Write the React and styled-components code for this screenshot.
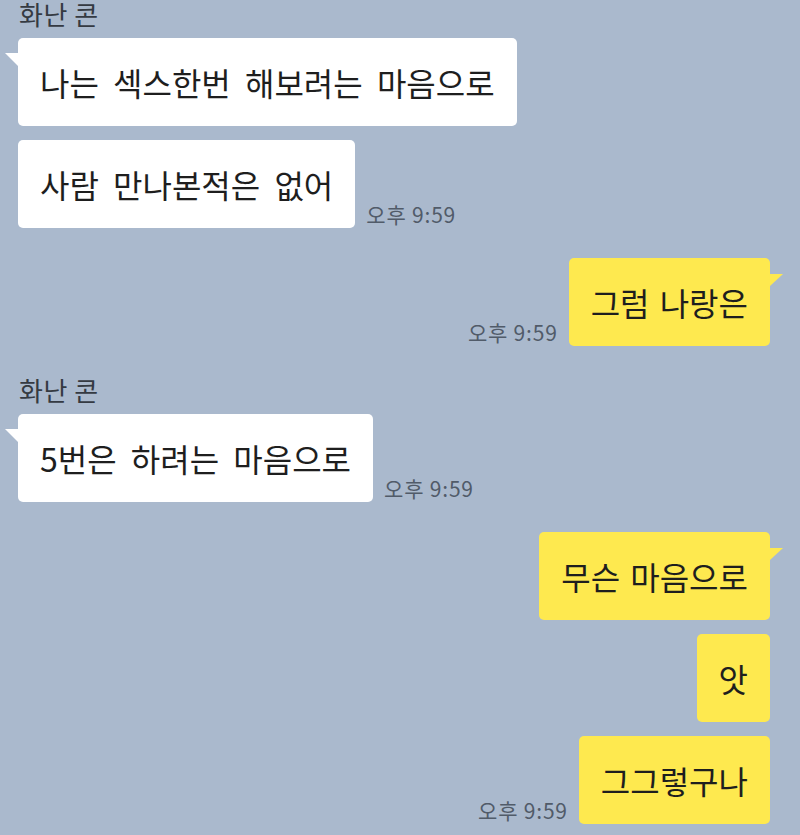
import React from 'react'
import styled, { createGlobalStyle, css } from 'styled-components'

const GlobalStyle = createGlobalStyle`
  html, body {
    margin: 0;
    padding: 0;
    background: #aab9cd;
  }
  body {
    font-family: "Noto Sans CJK KR", "Noto Sans", sans-serif;
  }
`

const Chat = styled.div`
  width: 800px;
  height: 835px;
  overflow: hidden;
  box-sizing: border-box;
  padding: 0 30px 0 18px;
  display: flex;
  flex-direction: column;
  gap: 30px;
  background: #aab9cd;
`

const Group = styled.div`
  display: flex;
  flex-direction: column;
  gap: 14px;
`

const Name = styled.div`
  font-size: 26px;
  line-height: 26px;
  padding-top: 1px;
  letter-spacing: 0.5px;
  color: #353a42;
  margin: 0 0 -3px 1px;
`

const Row = styled.div`
  display: flex;
  align-items: flex-end;
  justify-content: ${p => (p.$mine ? 'flex-end' : 'flex-start')};
  gap: 11px;
`

const tailLeft = css`
  &::before {
    content: '';
    position: absolute;
    left: -13px;
    top: 15px;
    border-right: 13px solid #fff;
    border-bottom: 13px solid transparent;
  }
`

const tailRight = css`
  &::before {
    content: '';
    position: absolute;
    right: -13px;
    top: 16px;
    border-left: 13px solid #fee94f;
    border-bottom: 12px solid transparent;
  }
`

const Bubble = styled.div`
  position: relative;
  background: ${p => (p.$mine ? '#fee94f' : '#ffffff')};
  border-radius: 5px;
  padding: 24px 22px;
  font-size: 32px;
  line-height: 40px;
  color: #1e1e1e;
  white-space: nowrap;
  word-spacing: ${p => (p.$mine ? '3px' : '7px')};
  ${p => p.$tail && (p.$mine ? tailRight : tailLeft)}
`

const Time = styled.span`
  font-size: 21px;
  line-height: 24px;
  letter-spacing: 0.8px;
  color: #515b69;
  margin-bottom: 2px;
  white-space: nowrap;
`

const groups = [
  {
    name: '화난 콘',
    messages: [
      { text: '나는 섹스한번 해보려는 마음으로' },
      { text: '사람 만나본적은 없어', time: '오후 9:59' },
    ],
  },
  { mine: true, messages: [{ text: '그럼 나랑은', time: '오후 9:59' }] },
  {
    name: '화난 콘',
    messages: [{ text: '5번은 하려는 마음으로', time: '오후 9:59' }],
  },
  {
    mine: true,
    messages: [
      { text: '무슨 마음으로' },
      { text: '앗' },
      { text: '그그렇구나', time: '오후 9:59' },
    ],
  },
]

const App = () => (
  <>
    <GlobalStyle />
    <Chat>
      {groups.map((g, gi) => (
        <Group key={gi}>
          {g.name && <Name>{g.name}</Name>}
          {g.messages.map((m, mi) => (
            <Row key={mi} $mine={g.mine}>
              {g.mine && m.time && <Time>{m.time}</Time>}
              <Bubble $mine={g.mine} $tail={mi === 0}>{m.text}</Bubble>
              {!g.mine && m.time && <Time>{m.time}</Time>}
            </Row>
          ))}
        </Group>
      ))}
    </Chat>
  </>
)

export default App
